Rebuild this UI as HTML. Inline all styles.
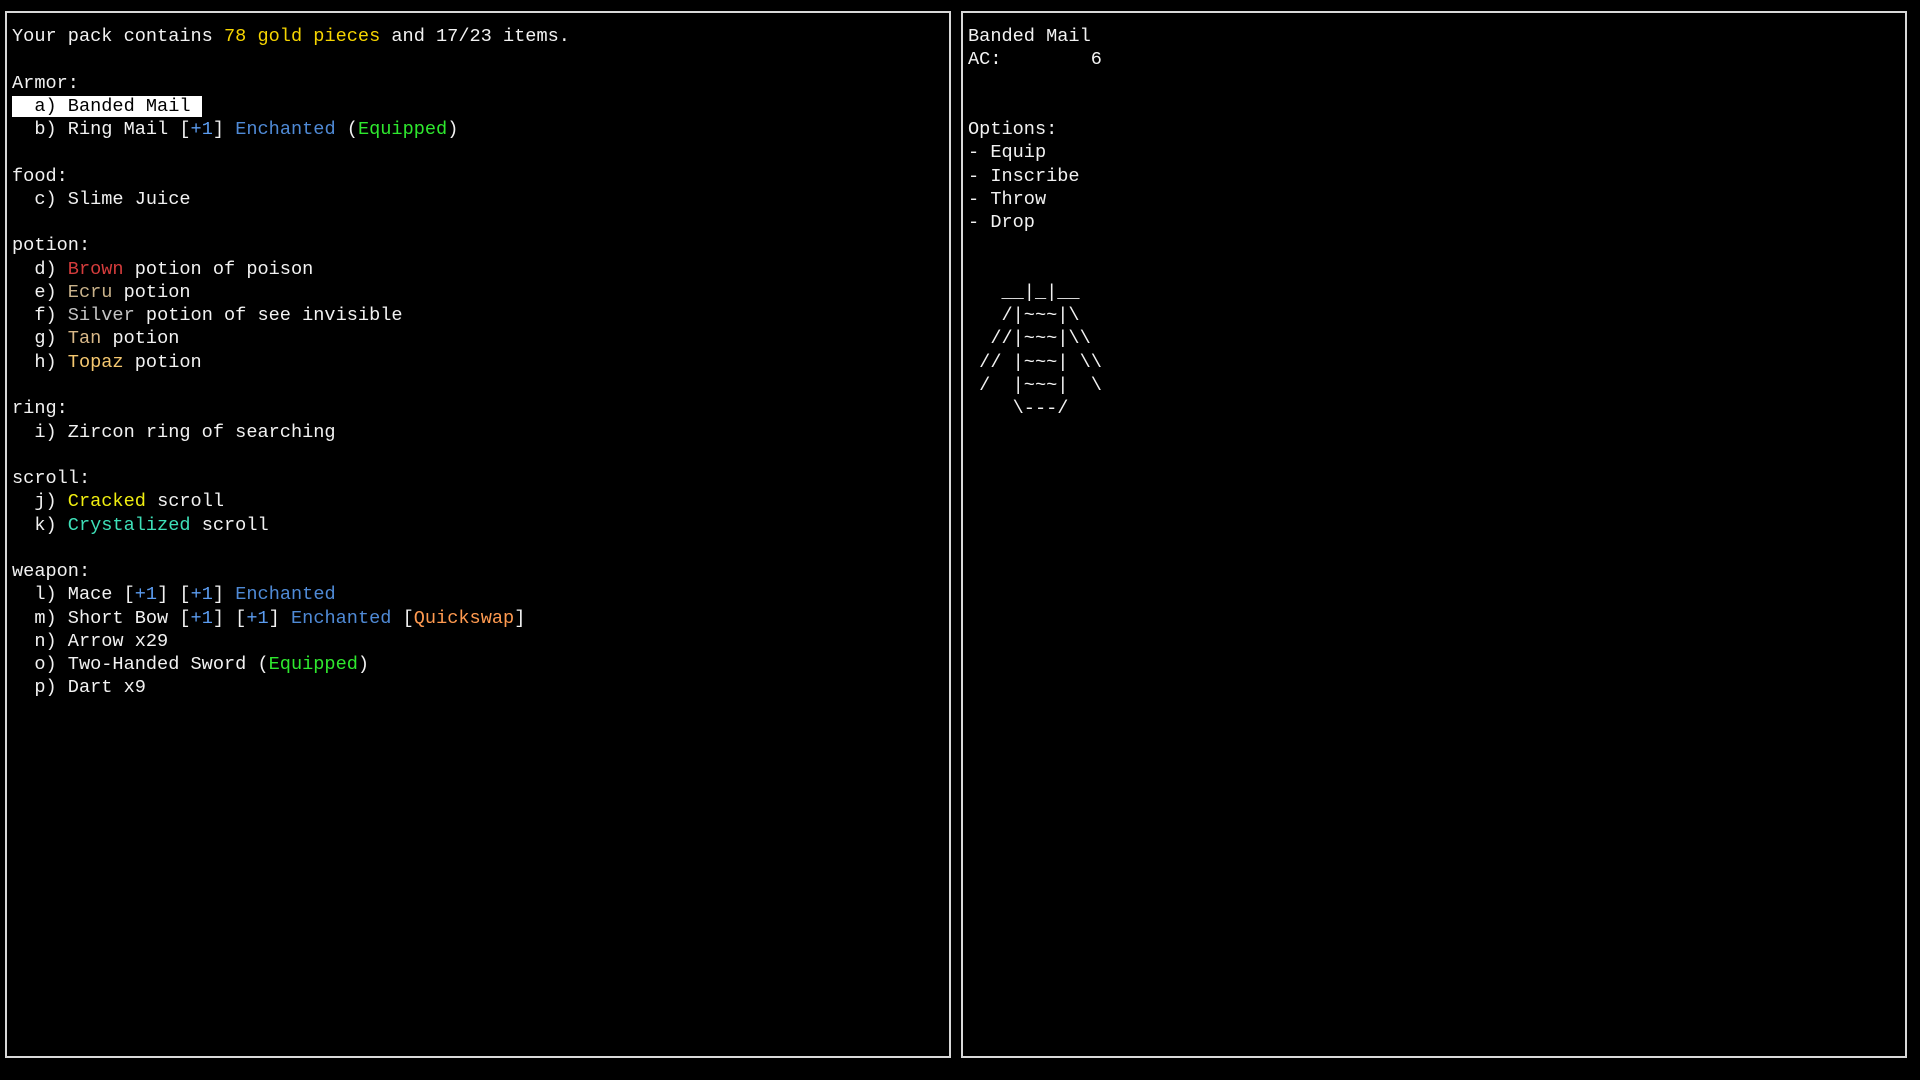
<!DOCTYPE html>
<html><head><meta charset="utf-8"><style>
html,body{margin:0;padding:0;background:#000;width:1920px;height:1080px;overflow:hidden}
.p{position:absolute;top:11px;height:1047px;border:2px solid #d8d8d8;box-sizing:border-box}
pre{margin:0;position:absolute;left:5px;top:12px;font-family:"Liberation Mono",monospace;font-size:18.6px;line-height:23.27px;color:#f2f2f2;white-space:pre}
.y{color:#f5d400}.b{color:#5b9cf0}.e{color:#4f8ad6}.g{color:#2ee82e}.hl{background:#fff;color:#000}
.br{color:#d43c3c}.ec{color:#c9b28a}.si{color:#c4c4c4}.ta{color:#d8b888}.to{color:#f5c870}
.cr{color:#f0ee10}.cy{color:#3ee0b8}.q{color:#ff9a50}
</style></head><body>
<div class="p" style="left:5px;width:946px"><pre>Your pack contains <span class="y">78 gold pieces</span> and 17/23 items.

Armor:
<span class="hl">  a) Banded Mail </span>
  b) Ring Mail [<span class="b">+1</span>] <span class="e">Enchanted</span> (<span class="g">Equipped</span>)

food:
  c) Slime Juice

potion:
  d) <span class="br">Brown</span> potion of poison
  e) <span class="ec">Ecru</span> potion
  f) <span class="si">Silver</span> potion of see invisible
  g) <span class="ta">Tan</span> potion
  h) <span class="to">Topaz</span> potion

ring:
  i) Zircon ring of searching

scroll:
  j) <span class="cr">Cracked</span> scroll
  k) <span class="cy">Crystalized</span> scroll

weapon:
  l) Mace [<span class="b">+1</span>] [<span class="b">+1</span>] <span class="e">Enchanted</span>
  m) Short Bow [<span class="b">+1</span>] [<span class="b">+1</span>] <span class="e">Enchanted</span> [<span class="q">Quickswap</span>]
  n) Arrow x29
  o) Two-Handed Sword (<span class="g">Equipped</span>)
  p) Dart x9</pre></div>
<div class="p" style="left:961px;width:946px"><pre>Banded Mail
AC:        6


Options:
- Equip
- Inscribe
- Throw
- Drop


   __|_|__
   /|~~~|\
  //|~~~|\\
 // |~~~| \\
 /  |~~~|  \
    \---/</pre></div>
</body></html>
